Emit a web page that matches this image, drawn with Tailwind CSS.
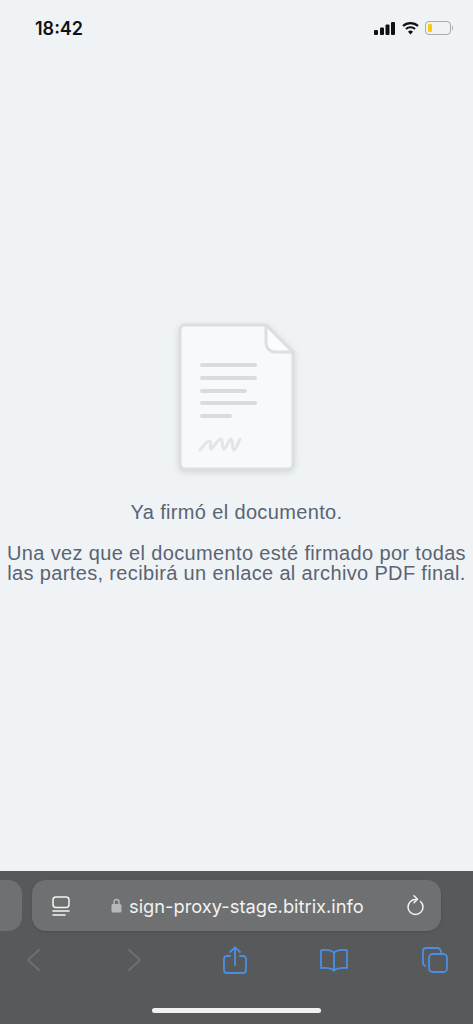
<!DOCTYPE html>
<html lang="es">
  <head>
    <meta charset="UTF-8" />
    <meta name="viewport" content="width=device-width, initial-scale=1.0" />
    <title>Firma</title>
    <script src="https://cdn.jsdelivr.net/npm/@tailwindcss/browser@4"></script>
  </head>
  <body class="h-screen flex flex-col bg-[#eff3f6] overflow-hidden font-['Liberation_Sans',sans-serif]">
    <!-- Status bar -->
    <header class="h-[58px] shrink-0 flex justify-between items-start pt-[19px] pl-[35px] pr-[20px] text-[#111]">
      <span class="font-['Inter',sans-serif] font-semibold text-[18px] leading-5">18:42</span>
      <div class="flex items-center gap-[5px] h-5 -mt-[1px]">
        <svg class="w-[21px] h-[14px]" viewBox="0 0 21 14" fill="#111">
          <rect x="0" y="9" width="4" height="5" rx="1" />
          <rect x="6" y="6.5" width="4" height="7.5" rx="1" />
          <rect x="11.5" y="3.5" width="4" height="10.5" rx="1" />
          <rect x="17" y="1" width="4" height="13" rx="1" />
        </svg>
        <svg class="w-[19px] h-[14px] ml-[1px]" viewBox="0 0 17 14" fill="none" stroke="#111" stroke-width="2.2">
          <path d="M1 5 A11 11 0 0 1 16 5" />
          <path d="M4 8 A6.6 6.6 0 0 1 13 8" />
          <path d="M8.5 13.6 L6 10.8 A3.6 3.6 0 0 1 11 10.8 Z" fill="#111" stroke="none" />
        </svg>
        <div class="flex items-center">
          <div class="w-[26px] h-[14px] rounded-[4px] border border-[#a9abad] p-[2px]">
            <div class="w-[4px] h-full rounded-[1px] bg-[#fbc70f]"></div>
          </div>
          <div class="w-[1px] h-[4px] bg-[#a9abad] ml-[1px] rounded-r"></div>
        </div>
      </div>
    </header>

    <!-- Contenido -->
    <main class="flex-1 flex flex-col items-center text-center text-[#5a6472] text-[20px] tracking-[0.35px] leading-[20px] pt-[265px]">
      <svg class="w-[118px] h-[150px] -ml-[1px] drop-shadow-[0_2px_3px_rgba(120,130,140,0.25)]" viewBox="0 0 118 150" fill="none">
        <path d="M8 2 H89 L116 29 V141 a5 5 0 0 1 -5 5 H8 a5 5 0 0 1 -5 -5 V7 a5 5 0 0 1 5 -5 Z" fill="#f7f9fb" stroke="#dcdee0" stroke-width="3" />
        <path d="M89 2 L116 29 H98 a9 9 0 0 1 -9 -9 Z" fill="#fbfcfd" stroke="#dcdee0" stroke-width="3" stroke-linejoin="round" />
        <g stroke="#d9dcdf" stroke-width="4" stroke-linecap="round">
          <path d="M25 42 H78" />
          <path d="M25 55 H78" />
          <path d="M25 68 H68" />
          <path d="M25 80 H78" />
          <path d="M25 93 H53" />
        </g>
        <path d="M23 127 C27 122 31 117 33 118 C35 119 32 126 34 126 C37 125 41 115 44 116 C46 117 45 126 47 126 C49 126 52 116 54 116 C56 116 55 127 57 127 C59 127 61 120 63 116" stroke="#e2e4e6" stroke-width="3" stroke-linecap="round" stroke-linejoin="round" />
      </svg>
      <p class="mt-[29px]">Ya firmó el documento.</p>
      <p class="mt-[21px] whitespace-nowrap">Una vez que el documento esté firmado por todas<br />las partes, recibirá un enlace al archivo PDF final.</p>
    </main>

    <!-- Barra de Safari -->
    <footer class="h-[153px] shrink-0 bg-[#58595b] flex flex-col">
      <div class="flex gap-[10px] pt-[9px]">
        <div class="w-[22px] h-[51px] bg-[#6f7071] rounded-r-[14px]"></div>
        <div class="w-[409px] h-[51px] bg-[#6f7071] rounded-[14px] flex items-center pl-[19px] pr-[15px] shadow-sm">
          <svg class="w-[20px] h-[20px]" viewBox="0 0 20 20" fill="none" stroke="#f4f4f4" stroke-width="1.500" stroke-linecap="round">
            <rect x="2" y="1" width="16" height="10.500" rx="3" />
            <path d="M2 15 H18" />
            <path d="M2 19 H14" />
          </svg>
          <svg class="w-[11px] h-[15px] ml-[40px]" viewBox="0 0 11 15">
            <path d="M3 6.500 V4 a2.500 2.500 0 0 1 5 0 V6.500" fill="none" stroke="#b8b9bb" stroke-width="1.400" />
            <rect x="0.500" y="6" width="10" height="8.500" rx="1.500" fill="#b8b9bb" />
          </svg>
          <span class="ml-[7px] text-[#f2f2f2] text-[18.3px] leading-6 font-['Inter',sans-serif] whitespace-nowrap">sign-proxy-stage.bitrix.info</span>
          <svg class="w-[19px] h-[21px] ml-auto -translate-x-[1px]" viewBox="0 0 19 21" fill="none" stroke="#f4f4f4" stroke-width="1.500" stroke-linecap="round" stroke-linejoin="round">
            <path d="M9.500 4.500 A7.500 7.500 0 1 0 17 12 A7.500 7.500 0 0 0 14.500 6.500" />
            <path d="M8 0.800 L11.500 4.300 L8 7.800" />
          </svg>
        </div>
      </div>

      <nav class="flex items-center h-[32px] mt-[13px] pl-[26px]">
        <svg class="w-[14px] h-[24px]" viewBox="0 0 14 24" fill="none" stroke="#6f7072" stroke-width="1.800" stroke-linecap="round" stroke-linejoin="round"><path d="M13 2 L2 12 L13 22" /></svg>
        <svg class="w-[14px] h-[24px] ml-[88px]" viewBox="0 0 14 24" fill="none" stroke="#6f7072" stroke-width="1.800" stroke-linecap="round" stroke-linejoin="round"><path d="M1 2 L12 12 L1 22" /></svg>
        <svg class="w-[24px] h-[28px] ml-[81px]" viewBox="0 0 24 28" fill="none" stroke="#4a90e2" stroke-width="1.800" stroke-linecap="round" stroke-linejoin="round">
          <path d="M7 10 H4 a3 3 0 0 0 -3 3 V24 a3 3 0 0 0 3 3 H20 a3 3 0 0 0 3 -3 V13 a3 3 0 0 0 -3 -3 H17" />
          <path d="M12 19 V1.500" />
          <path d="M7 6 L12 1.500 L17 6" />
        </svg>
        <svg class="w-[28px] h-[24px] ml-[73px]" viewBox="0 0 28 24" fill="none" stroke="#4a90e2" stroke-width="1.800" stroke-linecap="round" stroke-linejoin="round">
          <path d="M14 5 C12 2 8 1.500 2 2 a1 1 0 0 0 -1 1 V20 C7 19.500 11 20 14 22.500 C17 20 21 19.500 27 20 V3 a1 1 0 0 0 -1 -1 C20 1.500 16 2 14 5 Z" />
          <path d="M14 5 V22.500" />
        </svg>
        <svg class="w-[26px] h-[26px] ml-[74px]" viewBox="0 0 26 26" fill="none" stroke="#4a90e2" stroke-width="1.800" stroke-linejoin="round">
          <path d="M4 19 a3 3 0 0 1 -3 -3 V4 a3 3 0 0 1 3 -3 H15 a4 4 0 0 1 4 4 V6" />
          <rect x="7" y="7" width="18" height="18" rx="3.500" />
        </svg>
      </nav>

      <!-- Home indicator -->
      <div class="w-[169px] h-[5px] bg-[#f2f2f2] rounded-full mx-auto mt-[32px]"></div>
    </footer>
  </body>
</html>
